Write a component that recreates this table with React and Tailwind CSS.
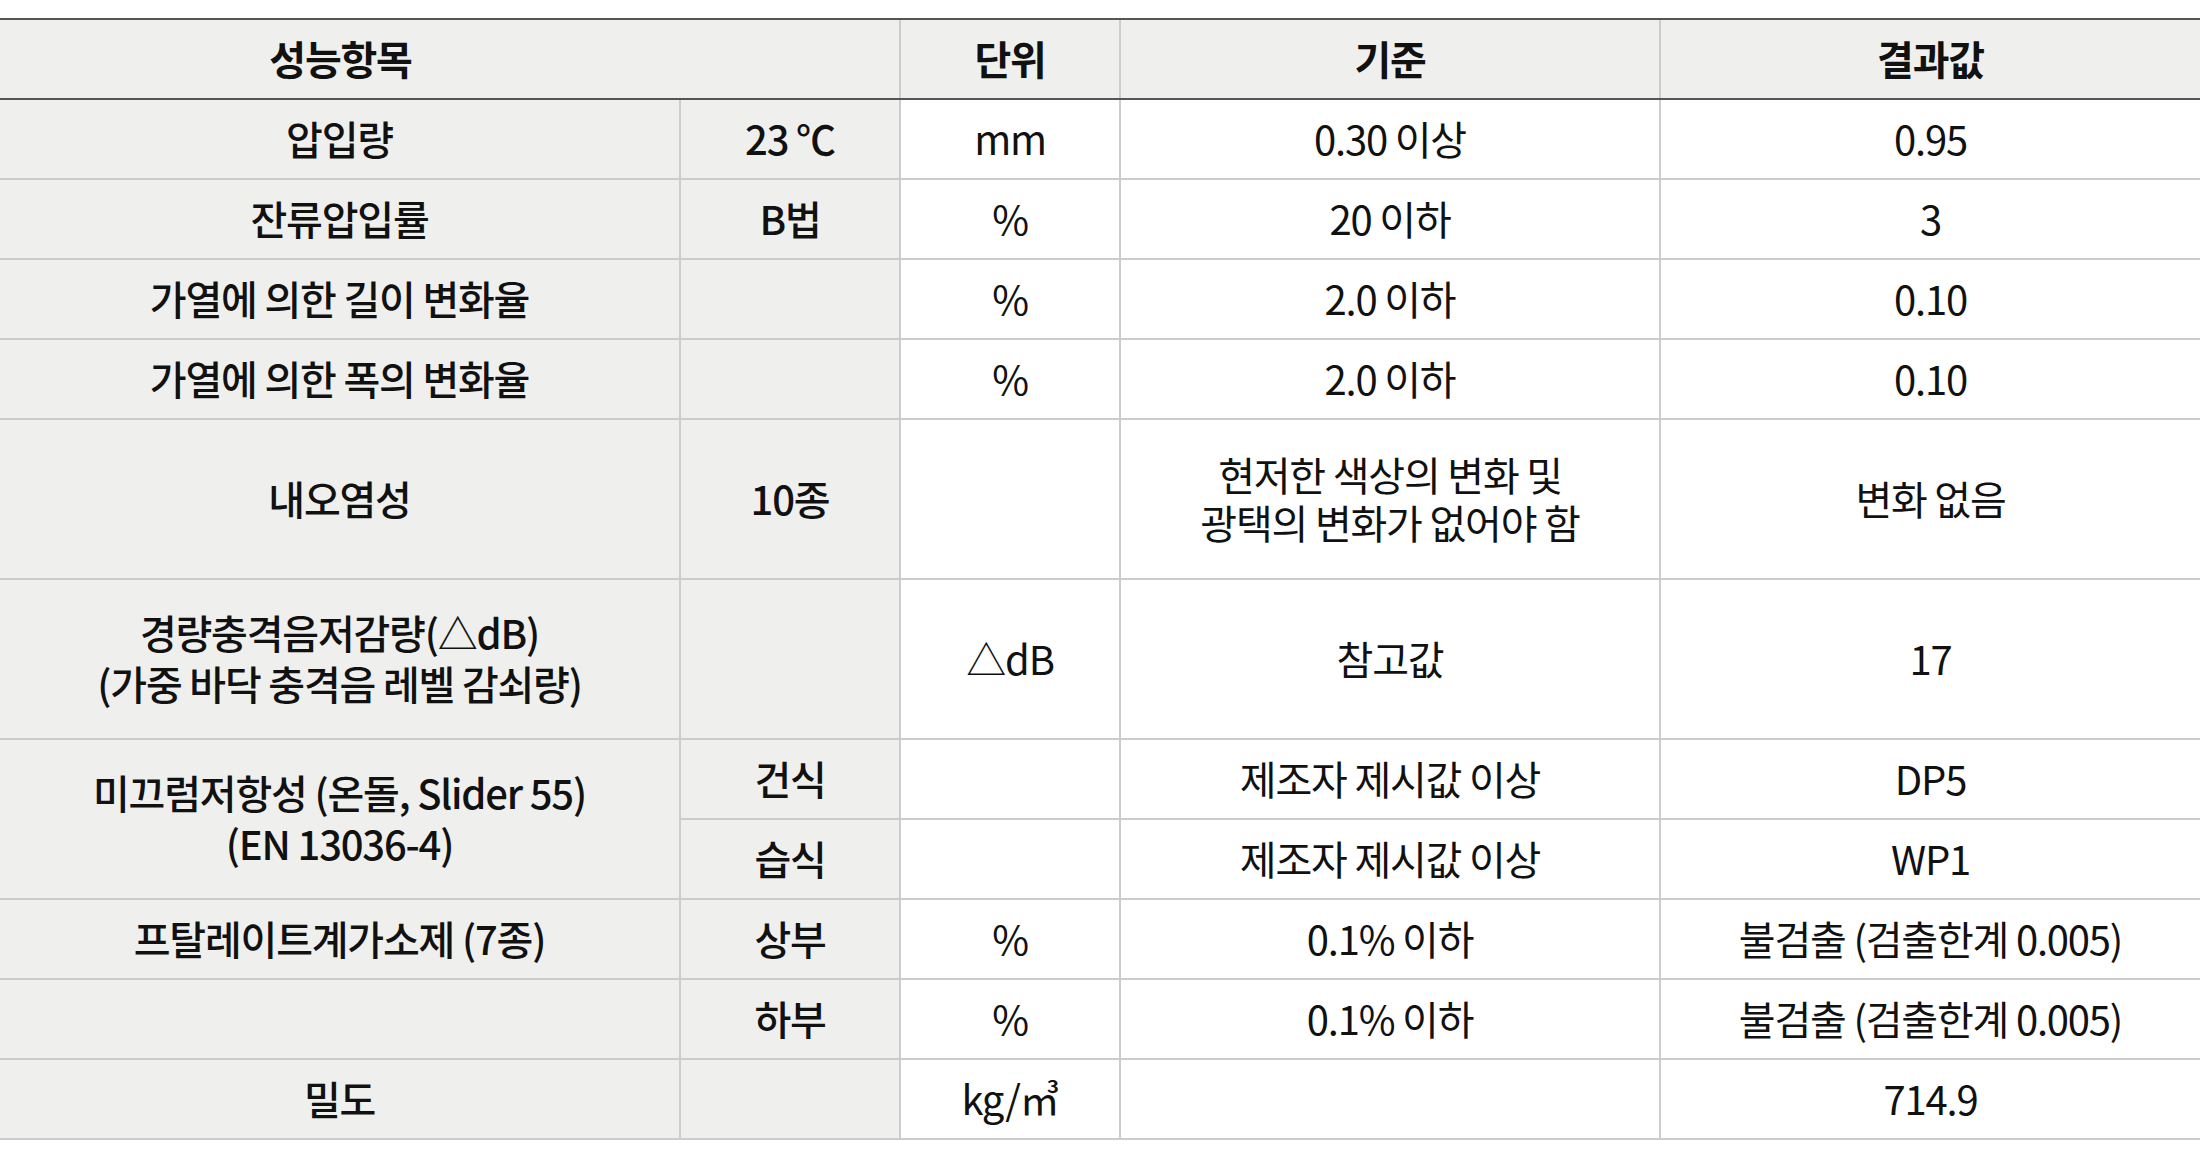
import React from "react";

const FONT = { fontFamily: '"Noto Sans CJK KR", "Noto Sans", sans-serif' };

const base =
  "flex items-center justify-center text-center border-b-2 border-[#cccccc] pb-[2px]";
const c1 = base + " bg-[#eff0ee] border-r-2 font-medium leading-[51px]";
const c2 = base + " bg-[#eff0ee] border-r-2 font-medium leading-[48px]";
const c3 = base + " bg-white border-r-2 leading-[48px]";
const c4 = base + " bg-white border-r-2 leading-[48px]";
const c5 = base + " bg-white leading-[48px]";

function Row({ a, b, c, d, e }) {
  return (
    <>
      <div className={c1}>{a}</div>
      <div className={c2}>{b}</div>
      <div className={c3}>{c}</div>
      <div className={c4}>{d}</div>
      <div className={c5}>{e}</div>
    </>
  );
}

export default function App() {
  return (
    <div
      className="w-[2200px] h-[1160px] bg-white pt-[18px] text-[#111111] text-[40px] tracking-[-0.03em]"
      style={FONT}
    >
      <div className="border-t-2 border-[#555555]">
        <div className="grid grid-cols-[901px_220px_540px_539px] h-[80px] border-b-2 border-[#555555] bg-[#eff0ee] font-bold leading-[48px]">
          <div className="flex items-center border-r-2 border-[#cccccc] pb-[3px]">
            <div className="w-[681px] text-center">성능항목</div>
          </div>
          <div className="flex items-center justify-center border-r-2 border-[#cccccc] pb-[3px]">단위</div>
          <div className="flex items-center justify-center border-r-2 border-[#cccccc] pb-[3px]">기준</div>
          <div className="flex items-center justify-center pb-[3px]">결과값</div>
        </div>
        <div className="grid grid-cols-[681px_220px_220px_540px_539px] grid-rows-[80px_80px_80px_80px_160px_160px_80px_80px_80px_80px_80px]">
          <Row a="압입량" b="23 ℃" c="mm" d="0.30 이상" e="0.95" />
          <Row a="잔류압입률" b="B법" c="%" d="20 이하" e="3" />
          <Row a="가열에 의한 길이 변화율" b="" c="%" d="2.0 이하" e="0.10" />
          <Row a="가열에 의한 폭의 변화율" b="" c="%" d="2.0 이하" e="0.10" />
          <Row
            a="내오염성"
            b="10종"
            c=""
            d={
              <span>
                현저한 색상의 변화 및
                <br />
                광택의 변화가 없어야 함
              </span>
            }
            e="변화 없음"
          />
          <Row
            a={
              <span>
                경량충격음저감량(△dB)
                <br />
                (가중 바닥 충격음 레벨 감쇠량)
              </span>
            }
            b=""
            c="△dB"
            d="참고값"
            e="17"
          />
          <div className={c1 + " row-span-2"}>
            <span>
              미끄럼저항성 (온돌, Slider 55)
              <br />
              (EN 13036-4)
            </span>
          </div>
          <div className={c2}>건식</div>
          <div className={c3}></div>
          <div className={c4}>제조자 제시값 이상</div>
          <div className={c5}>DP5</div>
          <div className={c2}>습식</div>
          <div className={c3}></div>
          <div className={c4}>제조자 제시값 이상</div>
          <div className={c5}>WP1</div>
          <Row a="프탈레이트계가소제 (7종)" b="상부" c="%" d="0.1% 이하" e="불검출 (검출한계 0.005)" />
          <Row a="" b="하부" c="%" d="0.1% 이하" e="불검출 (검출한계 0.005)" />
          <Row a="밀도" b="" c="kg/㎥" d="" e="714.9" />
        </div>
      </div>
    </div>
  );
}
